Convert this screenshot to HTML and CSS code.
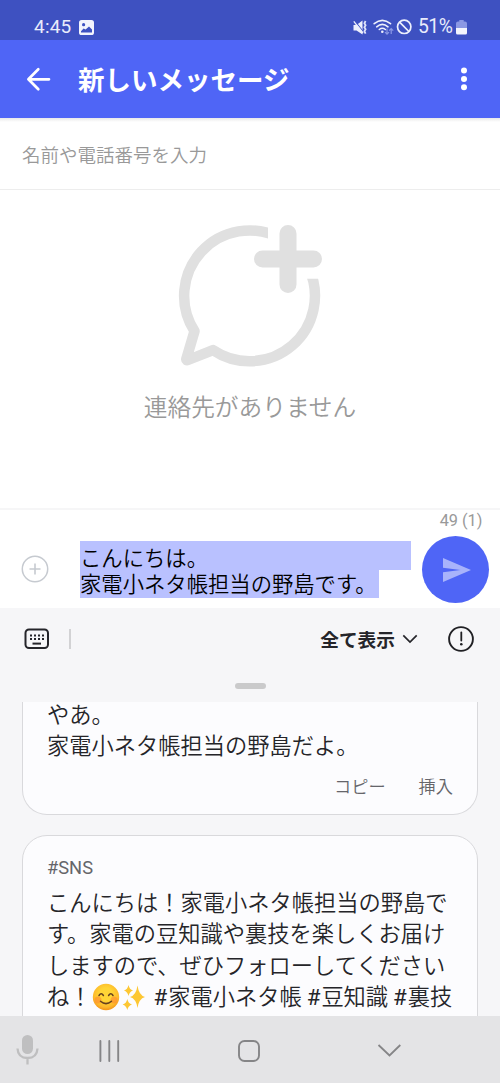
FILE: index.html
```html
<!DOCTYPE html>
<html lang="ja">
<head>
<meta charset="utf-8">
<title>新しいメッセージ</title>
<link rel="stylesheet" href="styles.css">
</head>
<body>
<div class="phone">
  <div class="status">
    <span class="clock">4:45</span>
    <svg class="status-photo" width="15" height="15" viewBox="0 0 15 15"><rect width="15" height="15" rx="2.6" fill="#f3f4fd"/><circle cx="4.6" cy="4.7" r="1.6" fill="#3e51c1"/><path d="M2 11.2 L4.6 8.6 L6.6 9.5 L10 6.5 L13 9.6 V12.6 H2Z" fill="#3e51c1"/></svg>
    <div class="status-right">
      <svg width="18" height="17" viewBox="354 18 18 17">
        <path d="M354.500 24 H357.500 L363.500 19.500 V33.500 L357.500 29.500 H354.500Z" fill="#edf0fc"/>
        <path d="M355.500 19.500 L364.500 31" stroke="#3e51c1" stroke-width="1.200"/>
        <path d="M354.800 20.300 L364 32" stroke="#edf0fc" stroke-width="1.300"/>
        <path d="M366.600 20 l-1.200 2.200 1.200 2 -1.200 2 1.200 2 -1.200 2 1.200 2.400" stroke="#dfe3fa" stroke-width="1.800" fill="none"/>
      </svg>
      <svg class="status-net" width="44" height="18" viewBox="372 17 44 18">
        <g fill="none" stroke="#edf0fc" stroke-width="1.600" stroke-linecap="round"><path d="M375.200 22.700 Q383.300 16.100 391.500 22.700"/><path d="M377.700 25.800 Q383.300 21.100 389 25.800"/><path d="M380.300 28.500 Q383.300 26 386.400 28.500"/></g>
        <circle cx="383.300" cy="30.800" r="1.300" fill="#edf0fc"/>
        <g fill="none" stroke="#8c99e5" stroke-width="1.200"><path d="M388 27.500 V33 M386 31.200 L388 33.200 L390 31.200"/><path d="M392.200 33 V27.800 M390.200 29.600 L392.200 27.600 L394.200 29.600"/></g>
        <circle cx="405.200" cy="25.800" r="6.700" fill="none" stroke="#edf0fc" stroke-width="1.700"/><path d="M400.600 21.100 L409.900 30.500" stroke="#edf0fc" stroke-width="1.700"/>
      </svg>
      <span class="percent">51%</span>
      <svg width="11" height="15" viewBox="0 0 11 15"><path d="M3.300 0h4.400v1.500H9Q11 1.500 11 3.500V8H0V3.500Q0 1.500 2 1.500h1.300Z" fill="#8b98e4"/><path d="M0 8h11v5q0 1.500-1.500 1.500h-8Q0 14.500 0 13Z" fill="#f4f5fd"/></svg>
    </div>
  </div>

  <header class="appbar">
    <svg width="26" height="26" viewBox="0 0 26 26" fill="none" stroke="#fff" stroke-width="2.700" stroke-linecap="round" stroke-linejoin="round"><path d="M13.300 3.300 L3.400 13.300 L13.300 23.300 M3.800 13.300 H24"/></svg>
    <h1 class="title">新しいメッセージ</h1>
    <svg class="more" width="8" height="24" viewBox="0 0 8 24" fill="#fff"><circle cx="4" cy="3.500" r="3"/><circle cx="4" cy="12" r="3"/><circle cx="4" cy="20.300" r="3"/></svg>
  </header>

  <div class="recipient">名前や電話番号を入力</div>

  <main class="empty">
    <svg width="150" height="150" viewBox="175 220 150 150">
      <defs><clipPath id="gap"><path d="M170 215H268V278.800H330V375H170Z"/></clipPath></defs>
      <path clip-path="url(#gap)" d="M280 238 A65.400 65.400 0 0 0 194.500 331.200 L186.300 359 Q186 360.800 188 360 L213 350.100 A65.400 65.400 0 0 0 308.700 268" fill="none" stroke="#e0e0e0" stroke-width="10.500" stroke-linejoin="round"/>
      <path d="M288 233.500 V284.500 M262.500 259 H313.500" stroke="#e0e0e0" stroke-width="17" stroke-linecap="round"/>
    </svg>
    <p class="empty-text">連絡先がありません</p>
  </main>

  <section class="compose">
    <svg class="add" width="28" height="28" viewBox="0 0 28 28" fill="none" stroke="#c6cad0"><circle cx="14" cy="14" r="12.700" stroke-width="1.500"/><path d="M8.500 14h11M14 8.500v11" stroke-width="1.600"/></svg>
    <div class="message"><div class="line first">こんにちは。</div><div class="line second">家電小ネタ帳担当の野島です。</div></div>
    <div class="send-col">
      <span class="count">49 (1)</span>
      <div class="send"><svg width="30" height="26" viewBox="0 0 30 26"><path d="M1 1 L29 13 L1 25 V15.300 L18.500 13 L1 10.700Z" fill="#a8b3fb"/></svg></div>
    </div>
  </section>

  <section class="panel">
    <div class="toolbar">
      <svg width="26" height="22" viewBox="0 0 26 22"><rect x="1.500" y="1.500" width="22.500" height="18.500" rx="3.500" fill="none" stroke="#25252a" stroke-width="2"/><path d="M6 7.600h14M6 11.100h14" stroke="#25252a" stroke-width="2" stroke-dasharray="2 2"/><path d="M8.500 15.600h8.500" stroke="#25252a" stroke-width="2"/></svg>
      <i class="divider"></i>
      <span class="show-all">全て表示</span>
      <svg class="chev" width="16" height="10" viewBox="0 0 16 10" fill="none" stroke="#25252a" stroke-width="1.700"><path d="M1.300 1.300 L8 8 L14.700 1.300"/></svg>
      <svg class="info" width="28" height="28" viewBox="0 0 28 28"><circle cx="14" cy="14" r="11.900" fill="none" stroke="#202024" stroke-width="1.900"/><path d="M14.300 7.500v8" stroke="#202024" stroke-width="1.800" stroke-linecap="round"/><circle cx="14.300" cy="19.300" r="1.300" fill="#202024"/></svg>
    </div>
    <div class="grip"></div>
    <div class="cards">
      <article class="card card-top">
        <p class="body">やあ。<br>家電小ネタ帳担当の野島だよ。</p>
        <div class="actions"><span>コピー</span><span>挿入</span></div>
      </article>
      <article class="card card-sns">
        <div class="tag">#SNS</div>
        <p class="body">こんにちは！家電小ネタ帳担当の野島で<br>す。家電の豆知識や裏技を楽しくお届け<br>しますので、ぜひフォローしてください<br>ね！<svg class="emoji" width="54" height="28" viewBox="0 0 54 28">
          <defs><radialGradient id="face" cx=".5" cy=".4" r=".6"><stop offset=".4" stop-color="#ffd536"/><stop offset=".8" stop-color="#fdb92b"/><stop offset="1" stop-color="#f39418"/></radialGradient></defs>
          <circle cx="14" cy="14" r="13.200" fill="url(#face)"/><circle cx="6" cy="17" r="3.500" fill="#ff8a32" opacity=".6"/><circle cx="22" cy="17" r="3.500" fill="#ff8a32" opacity=".6"/>
          <path d="M7 12.500Q9.200 9 11.400 12.500M16.600 12.500Q18.800 9 21 12.500M8.500 18.300Q14 23 19.500 18.300" fill="none" stroke="#65401f" stroke-width="1.500" stroke-linecap="round"/>
          <path d="M45.500 2.500Q46.800 12.200 53 14Q46.800 15.800 45.500 25Q44.200 15.800 38 14Q44.200 12.200 45.500 2.500Z M36.500 2Q37.500 6.500 41 7.500Q37.500 8.500 36.500 13Q35.500 8.500 32 7.500Q35.500 6.500 36.500 2Z M35.300 16Q36.300 20.500 40 21.500Q36.300 22.500 35.300 27Q34.300 22.500 30.600 21.500Q34.300 20.500 35.300 16Z" fill="#fdc733"/>
        </svg><span class="hashes"><span class="hash">#</span>家電小ネタ帳 <span class="hash">#</span>豆知識 <span class="hash">#</span>裏技</span></p>
      </article>
    </div>
  </section>

  <nav class="nav">
    <svg width="500" height="67" viewBox="0 1016 500 67" fill="none" stroke="#858587">
      <rect x="22" y="1035" width="11" height="19" rx="5.500" fill="#bfbfc0" stroke="none"/>
      <path d="M17.500 1048.500Q18 1058 27.500 1058Q37 1058 37.500 1048.500M27.500 1058V1064.500" stroke="#bfbfc0" stroke-width="2.300"/>
      <path d="M100.400 1041V1061M109.300 1041V1061M118.200 1041V1061" stroke-width="1.900" stroke-linecap="round"/>
      <rect x="239" y="1041" width="20" height="20" rx="5.500" stroke-width="1.900"/>
      <path d="M378.500 1045L389.500 1055.500L400.300 1045" stroke-width="1.800"/>
    </svg>
  </nav>
</div>
</body>
</html>
```
FILE: styles.css
```css
* { box-sizing: border-box; }
body { margin: 0; font-family: Roboto, "Noto Sans CJK JP", sans-serif; background: #fff; }
h1, p { margin: 0; }
svg { display: block; flex: none; }
.phone { width: 500px; height: 1083px; display: flex; flex-direction: column; overflow: hidden; white-space: nowrap; }
.phone > * { flex: none; }

.status { height: 40px; background: #3e51c1; display: flex; align-items: center; padding: 14px 33px 0 34px; color: #e9ecfb; }
.clock { font-size: 19px; line-height: 24px; width: 38px; letter-spacing: .2px; }
.status-photo { margin-left: 7px; }
.status-right { margin-left: auto; display: flex; align-items: center; }
.status-net { margin-right: 3px; }
.percent { font-size: 19.300px; line-height: 24px; width: 38px; letter-spacing: -.5px; }

.appbar { height: 78px; background: #4f65f6; display: flex; align-items: center; padding: 0 32px 0 25px; }
.title { font-family: "Noto Sans CJK JP", sans-serif; font-size: 26.500px; font-weight: 700; line-height: 40px; color: #fff; margin-left: 27px; }
.more { margin-left: auto; }

.recipient { height: 72px; border-bottom: 1px solid #ededed; padding: 22px; font: 350 18.500px/28px "Noto Sans CJK JP", sans-serif; color: #999; background: linear-gradient(#e9e9e9, #fff 4px); }

.empty { height: 318px; display: flex; flex-direction: column; align-items: center; padding-top: 30px; }
.empty-text { margin-top: 18px; font: 350 23.700px/36px "Noto Sans CJK JP", sans-serif; color: #999; }

.compose { height: 100px; border-top: 2px solid #f6f6f7; display: flex; }
.add { margin: 45px 0 0 21px; }
.message { margin: 31px 0 0 31px; width: 331px; font-family: "Noto Sans CJK JP", sans-serif; font-weight: 350; font-size: 21.330px; color: #000; }
.line { background: #b9c1ff; }
.first { height: 29px; line-height: 31px; }
.second { height: 28px; line-height: 26px; width: 299px; }
.send-col { margin-left: 10px; width: 68px; display: flex; flex-direction: column; align-items: center; }
.count { font-size: 16.300px; line-height: 20px; margin: 1px 0 0 12px; color: #999; }
.send { width: 67px; height: 67px; border-radius: 50%; background: #4f65f6; margin-top: 5px; display: flex; align-items: center; justify-content: center; padding-left: 3px; }

.panel { height: 408px; background: #f6f6f8; display: flex; flex-direction: column; }
.toolbar { height: 62px; display: flex; align-items: center; padding: 0 25px 0 24px; }
.divider { width: 2px; height: 20px; background: #d2d2d4; margin-left: 19px; }
.show-all { margin-left: auto; font: 700 18.700px/28px "Noto Sans CJK JP", sans-serif; color: #25252a; }
.chev { margin-left: 7px; }
.info { margin-left: 29px; }
.grip { width: 31px; height: 6px; border-radius: 3px; background: #cacacb; margin: 13px 0 0 235px; }
.cards { height: 314px; margin-top: 13px; padding: 0 22px; overflow: hidden; }
.card { border: 1.500px solid #d9d9dc; border-radius: 25px; background: #fcfcfe; padding: 0 24px; color: #252529; }
.card-top { height: 113px; border-top: 0; border-radius: 0 0 25px 25px; display: flow-root; }
.card-sns { height: 330px; margin-top: 20px; padding-top: 20px; }
.body { font: 350 22.250px/31.300px "Noto Sans CJK JP", sans-serif; }
.card-top .body { margin-top: -4px; }
.actions { display: flex; justify-content: flex-end; gap: 33px; margin-top: 12px; font: 350 17.200px/26px "Noto Sans CJK JP", sans-serif; color: #65656a; }
.tag { font-size: 18.300px; line-height: 24px; color: #65656a; }
.tag + .body { margin-top: 6px; }
.emoji { display: inline-block; vertical-align: -6px; }
.hashes { margin-left: 8px; }
.hash { font-family: Roboto, sans-serif; font-weight: 400; margin-right: 1px; }

.nav { height: 67px; background: #e4e4e6; }
```
